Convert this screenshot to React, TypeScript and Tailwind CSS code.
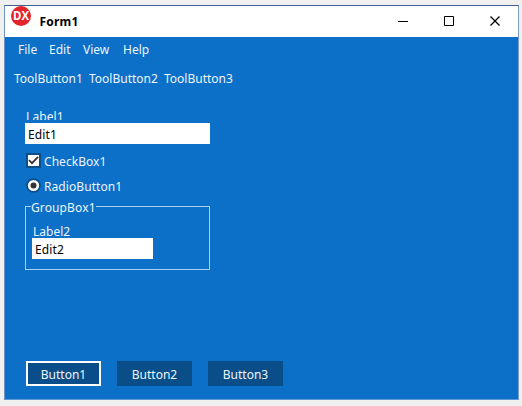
import type { ReactNode } from "react";

function TitleBar() {
  return (
    <header className="flex h-[31px] shrink-0 bg-white text-black">
      <svg className="ml-[6px] h-[20px] w-[20px] shrink-0" viewBox="0 0 20 20">
        <circle cx="10" cy="10" r="10" fill="#e3242b" />
        <text x="2" y="14.2" fontFamily="Open Sans, sans-serif" fontSize="11.5" fontWeight="700" fill="#fff" textLength="16" lengthAdjust="spacingAndGlyphs">DX</text>
      </svg>
      <h1 className="ml-[8.5px] mt-[8px] flex-1 text-[12px] leading-4 font-bold tracking-[0.2px]">Form1</h1>
      <svg className="h-[31px] w-[138px] shrink-0" viewBox="0 0 138 31" fill="none" stroke="#000">
        <path d="M18 15.5h10" />
        <path d="M64.5 10.5h9v9h-9z" />
        <path d="M110.5 10.5l9 9M119.5 10.5l-9 9" strokeWidth="1.3" />
      </svg>
    </header>
  );
}

function Edit({ value, className }: { value: string; className: string }) {
  return <div className={`h-[21px] bg-white pl-[3px] pt-[4px] leading-4 tracking-[0.1px] text-black ${className}`}>{value}</div>;
}

function Button({ children, focused }: { children: ReactNode; focused?: boolean }) {
  return (
    <button className={`flex h-[25px] w-[75px] items-center justify-center bg-[#094e88] pt-[2px] leading-4 ${focused ? "shadow-[inset_0_0_0_2px_#fff]" : ""}`}>
      {children}
    </button>
  );
}

export default function App() {
  return (
    <div className="h-[406px] w-[522px] bg-[#f0f0f0] pl-[4px] pt-[5px] font-['Noto_Sans',sans-serif] text-[12px]">
      <main className="flex h-[395px] w-[515px] flex-col border border-t-[#40618f] border-r-[#7b9bce] border-b-[#5f96d5] border-l-[#6d93c4] bg-[#0c6fc8] text-[#edf5fc]">
        <TitleBar />
        <nav className="flex pl-[13px] pt-[5px] leading-4">
          <span className="w-[31px]">File</span>
          <span className="w-[34px]">Edit</span>
          <span className="w-[40px]">View</span>
          <span>Help</span>
        </nav>
        <div className="mt-[13px] flex pl-[9px] leading-4">
          <span className="w-[75px]">ToolButton1</span>
          <span className="w-[75px]">ToolButton2</span>
          <span>ToolButton3</span>
        </div>
        <section className="mt-[21px] flex flex-col pl-[20px]">
          <div className="h-[12px] overflow-hidden pl-[1px] leading-[18px] tracking-[0.1px]">Label1</div>
          <Edit value="Edit1" className="mt-[3px] w-[185px]" />
          <div className="mt-[9px] flex h-[16px] pl-[1px]">
            <svg className="h-[15px] w-[15px]" viewBox="0 0 15 15">
              <path d="M0 0h15v15H0z" fill="#094e88" />
              <path d="M2 2h11v11H2z" fill="#fff" />
              <path d="M3 7.2l3 3 6-6.4" fill="none" stroke="#333" strokeWidth="1.8" />
            </svg>
            <span className="ml-[3px] leading-[18px] tracking-[0.05px]">CheckBox1</span>
          </div>
          <div className="mt-[9px] flex h-[16px] pl-[1px]">
            <svg className="h-[15px] w-[15px]" viewBox="0 0 15 15">
              <circle cx="7.5" cy="7.5" r="7.3" fill="#094e88" />
              <circle cx="7.5" cy="7.5" r="5.6" fill="#fff" />
              <circle cx="7.5" cy="7.5" r="3" fill="#333" />
            </svg>
            <span className="ml-[3px] leading-[18px] tracking-[0.08px]">RadioButton1</span>
          </div>
          <fieldset className="mt-[5px] h-[71px] w-[185px] border border-[#a9d0f3] pl-[6px]">
            <legend className="-ml-[1px] h-[15px] leading-[18px] tracking-[0.12px]">GroupBox1</legend>
            <div className="mt-[9px] h-[15px] pl-[1px] leading-[18px]">Label2</div>
            <Edit value="Edit2" className="w-[121px]" />
          </fieldset>
        </section>
        <footer className="mt-auto mb-[13px] flex gap-[16px] pl-[21px]">
          <Button focused>Button1</Button>
          <Button>Button2</Button>
          <Button>Button3</Button>
        </footer>
      </main>
    </div>
  );
}
